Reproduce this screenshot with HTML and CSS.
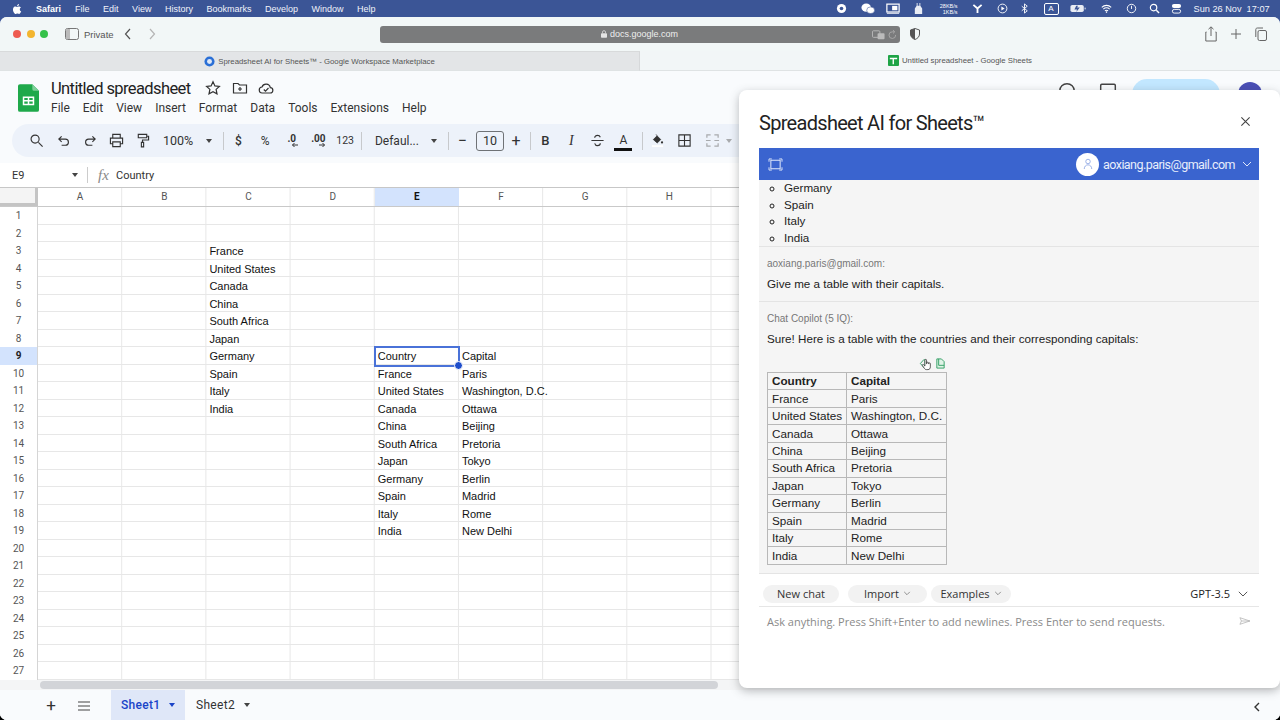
FILE: index.html
```html
<!DOCTYPE html>
<html lang="en">
<head>
<meta charset="utf-8">
<title>Untitled spreadsheet - Google Sheets</title>
<link rel="stylesheet" href="styles.css">
</head>
<body>
<header class="menubar">
  <svg class="apple" viewBox="0 0 24 24"><path fill="#fff" d="M17.6 12.8c0-2.6 2.1-3.8 2.2-3.9-1.2-1.8-3.1-2-3.7-2-1.6-.2-3.1.9-3.9.9s-2-.9-3.3-.9c-1.7 0-3.3 1-4.1 2.5-1.8 3.1-.5 7.6 1.2 10.1.9 1.2 1.9 2.6 3.2 2.5 1.3 0 1.8-.8 3.3-.8s2 .8 3.3.8c1.4 0 2.3-1.2 3.1-2.5 1-1.4 1.4-2.8 1.4-2.9-.1 0-2.7-1-2.7-3.8zM15.1 5.2c.7-.9 1.2-2 1-3.2-1 0-2.2.7-2.9 1.5-.6.7-1.2 1.9-1 3.1 1.1.1 2.2-.6 2.9-1.4z"/></svg>
  <b class="mb-app">Safari</b>
  <nav class="mb-menu"><span>File</span><span>Edit</span><span>View</span><span>History</span><span>Bookmarks</span><span>Develop</span><span>Window</span><span>Help</span></nav>
  <div class="status">
    <svg class="si" viewBox="0 0 12 12"><circle cx="6" cy="6" r="5" fill="#fff"/><circle cx="6" cy="6" r="2" fill="#3b5596"/></svg>
    <svg class="si wide" viewBox="0 0 16 12"><ellipse cx="6" cy="5" rx="5.5" ry="4.6" fill="#fff"/><ellipse cx="11" cy="8" rx="4.5" ry="3.8" fill="#fff" stroke="#3b5596" stroke-width=".6"/></svg>
    <svg class="si wide loose" viewBox="0 0 16 12"><rect x="1" y="1" width="14" height="9" fill="none" stroke="#fff" stroke-width="1.4"/><rect x="7" y="3" width="6" height="5" fill="#fff"/><path d="M1 11.5h14" stroke="#fff"/></svg>
    <svg class="si tight" viewBox="0 0 12 12"><path fill="#e8ecf4" d="M4 0h1v3h2V0h1v3l2 3v6H2V6l2-3z"/></svg>
    <div class="netspeed"><span>28KB/s</span><span>1KB/s</span></div>
    <svg class="si" viewBox="0 0 12 12"><path d="M1.5 2 6 6l4.500-4M6 6v5" fill="none" stroke="#fff" stroke-width="2"/></svg>
    <svg class="si tight" viewBox="0 0 12 12"><circle cx="6" cy="6" r="4.800" fill="none" stroke="#fff"/><path d="M4.800 3.800v4.400L8.300 6z" fill="#fff"/></svg>
    <svg class="si" viewBox="0 0 12 12"><path d="m3 3.500 6 5-3 2.500V1l3 2.500-6 5" fill="none" stroke="#fff"/></svg>
    <span class="inputbox">A</span>
    <svg class="si batt" viewBox="0 0 18 10"><rect x=".5" y="1" width="15" height="8" rx="2" fill="#e8ecf4"/><path d="M7 2 5 6h3l-1 3 4-5H8l1-2z" fill="#3b5596"/><path d="M17 4v2" stroke="#fff"/></svg>
    <svg class="si wifi" viewBox="0 0 14 12"><path d="M1 4.500a8.500 8.500 0 0 1 12 0M3 6.800a5.600 5.600 0 0 1 8 0M5 9a2.800 2.800 0 0 1 4 0" fill="none" stroke="#fff" stroke-width="1.300"/><circle cx="7" cy="10.600" r="1" fill="#fff"/></svg>
    <svg class="si mid" viewBox="0 0 12 12"><circle cx="6" cy="6" r="4.600" fill="none" stroke="#fff"/><path d="M6 3v3.500" stroke="#fff"/></svg>
    <svg class="si tight" viewBox="0 0 12 12"><circle cx="5" cy="5" r="3.500" fill="none" stroke="#fff" stroke-width="1.300"/><path d="m8 8 3 3" stroke="#fff" stroke-width="1.500"/></svg>
    <svg class="si tight" viewBox="0 0 12 12"><rect x="1" y="1" width="10" height="4.500" rx="2.200" fill="#fff"/><rect x="1.500" y="7" width="9" height="4" rx="2" fill="none" stroke="#fff"/></svg>
    <span class="clock">Sun 26 Nov&nbsp; 17:07</span>
  </div>
</header>

<div class="window">
  <div class="browserbar">
    <div class="lights"><i class="red"></i><i class="yellow"></i><i class="green"></i></div>
    <svg class="sidebar-ic" viewBox="0 0 14 12"><rect x=".5" y=".5" width="13" height="11" rx="2" fill="none" stroke="#777"/><rect x="1" y="1" width="4" height="10" fill="#bbb"/></svg>
    <span class="private">Private</span>
    <svg class="nav-ic" viewBox="0 0 8 12"><path d="M6 1 1.500 6 6 11" fill="none" stroke="#555" stroke-width="1.200"/></svg>
    <svg class="nav-ic fwd" viewBox="0 0 8 12"><path d="m2 1 4.500 5L2 11" fill="none" stroke="#b5b5b5" stroke-width="1.200"/></svg>
    <div class="urlbar">
      <span class="url"><svg class="lock" viewBox="0 0 8 10"><rect y="4" width="8" height="6" rx="1" fill="#e4e4e4"/><path d="M2 4V2.500a2 2 0 0 1 4 0V4" fill="none" stroke="#e4e4e4"/></svg>docs.google.com</span>
      <svg class="url-tr" viewBox="0 0 14 10"><rect x=".5" y=".5" width="8" height="7" rx="1" fill="none" stroke="#bbb"/><rect x="6" y="3" width="7.500" height="6.500" rx="1" fill="#bbb"/></svg>
      <svg class="url-re" viewBox="0 0 10 12"><path d="M8.500 6.500A3.700 3.700 0 1 1 5 3h2M5.500 1 7.500 3 5.500 5" fill="none" stroke="#aaa"/></svg>
    </div>
    <svg class="shield" viewBox="0 0 10 12"><path d="M5 .5 9.500 2v4c0 2.800-2 4.500-4.500 5.500C2.500 10.500.5 8.800.5 6V2z" fill="none" stroke="#555"/><path d="M5 .5V11.500C2.500 10.500.5 8.800.5 6V2z" fill="#555"/></svg>
    <div class="bb-right">
      <svg viewBox="0 0 12 16"><path d="M1.500 6H.8v9h10.400V6h-.7M6 10V1M3.500 3.200 6 .8l2.500 2.400" fill="none" stroke="#666"/></svg>
      <svg viewBox="0 0 12 16"><path d="M6 3v10M1 8h10" fill="none" stroke="#666"/></svg>
      <svg viewBox="0 0 12 16"><rect x="3" y="4.500" width="8.500" height="10" rx="1.500" fill="none" stroke="#666"/><path d="M.8 11V3.500c0-1 .7-1.500 1.500-1.500H8" fill="none" stroke="#666"/></svg>
    </div>
  </div>

  <div class="tabs">
    <div class="tab off">
      <svg class="fav" viewBox="0 0 12 12"><circle cx="6" cy="6" r="5.500" fill="#2a6fd6"/><circle cx="6" cy="6" r="2.700" fill="#dfe8f6"/></svg>
      <span>Spreadsheet AI for Sheets™ - Google Workspace Marketplace</span>
    </div>
    <div class="tab on">
      <svg class="fav" viewBox="0 0 12 12"><rect width="12" height="12" rx="1" fill="#1ea446"/><path d="M2 3h8v1.500H6.500V10H5V4.500H2z" fill="#fff"/></svg>
      <span>Untitled spreadsheet - Google Sheets</span>
    </div>
  </div>

  <main class="sheets">
    <div class="docbar">
      <svg class="logo" viewBox="0 0 22 29"><path d="M2 0h13l7 7v20a2 2 0 0 1-2 2H2a2 2 0 0 1-2-2V2a2 2 0 0 1 2-2z" fill="#1fa94b"/><path d="M15 0l7 7h-5a2 2 0 0 1-2-2z" fill="#7fd09a"/><path d="M5 13h12v9H5zm1.600 1.500v2.200h3.600v-2.200zm5.200 0v2.200h3.600v-2.200zm-5.200 3.700v2.300h3.600v-2.300zm5.200 0v2.300h3.600v-2.300z" fill="#fff" fill-rule="evenodd"/></svg>
      <div class="docmeta">
        <div class="titlerow">
          <span class="doctitle">Untitled spreadsheet</span>
          <svg class="ti" viewBox="0 0 16 16"><path d="m8 1.800 1.900 4.100 4.500.5-3.300 3 .9 4.400L8 11.600l-4 2.200.9-4.400-3.300-3 4.500-.5z" fill="none" stroke="#333" stroke-width="1.200"/></svg>
          <svg class="ti" viewBox="0 0 16 16"><path d="M1.500 3.500h4.500l1.500 1.500h7v8h-13zM8 7v4M6 9h4" fill="none" stroke="#333" stroke-width="1.200"/></svg>
          <svg class="ti" viewBox="0 0 16 16"><path d="M4.500 13a3 3 0 0 1-.5-6 4.300 4.300 0 0 1 8.300 0.600A2.700 2.700 0 0 1 12 13zM5.800 9.500l1.700 1.700L10.500 8" fill="none" stroke="#333" stroke-width="1.200"/></svg>
        </div>
        <nav class="docmenu"><span>File</span><span>Edit</span><span>View</span><span>Insert</span><span>Format</span><span>Data</span><span>Tools</span><span>Extensions</span><span>Help</span></nav>
      </div>
      <div class="share-bits">
        <svg class="hist" viewBox="0 0 16 16"><circle cx="8" cy="8" r="6.500" fill="none" stroke="#444" stroke-width="1.300"/></svg>
        <svg class="hist" viewBox="0 0 16 16"><rect x="1.500" y="2" width="13" height="11" rx="1" fill="none" stroke="#444" stroke-width="1.300"/></svg>
        <span class="sharepill"></span>
        <span class="avatar"></span>
      </div>
    </div>

    <div class="toolbar">
      <span class="tb w28"><svg viewBox="0 0 16 16"><circle cx="6.500" cy="6.500" r="4.300" class="ln"/><path d="m10 10 4.500 4.500" class="ln"/></svg></span>
      <span class="tb w27"><svg viewBox="0 0 16 16"><path d="M6 3.500 3 6.500l3 3M3 6.500h7a3 3 0 0 1 0 6.500H6" class="ln"/></svg></span>
      <span class="tb"><svg viewBox="0 0 16 16"><path d="m10 3.500 3 3-3 3M13 6.500H6a3 3 0 0 0 0 6.500h4" class="ln"/></svg></span>
      <span class="tb"><svg viewBox="0 0 16 16"><path d="M4 5V1.500h8V5M4 11.500H1.500V5.500h13v6H12M4 9.500h8v5H4z" class="ln"/></svg></span>
      <span class="tb"><svg viewBox="0 0 16 16"><path d="M3.500 1.500h9v3.500h-9zM12.500 3.500h2v4H8v2.500M6.800 10h2.400v4.800H6.800z" class="ln"/></svg></span>
      <span class="tb txt zoomv">100%</span>
      <span class="tb caret-w"><i class="caret"></i></span>
      <i class="sep"></i>
      <span class="tb txt num strong">$</span>
      <span class="tb txt num">%</span>
      <span class="tb txt num dec">.0<svg viewBox="0 0 8 6"><path d="M7 3H1.500M3.500 1 1.500 3l2 2" fill="none" stroke="#333"/></svg></span>
      <span class="tb txt num dec">.00<svg viewBox="0 0 8 6"><path d="M1 3h5.500M4.500 1l2 2-2 2" fill="none" stroke="#333"/></svg></span>
      <span class="tb txt num small">123</span>
      <i class="sep narrow"></i>
      <span class="tb txt fontname">Defaul...</span>
      <span class="tb caret-w"><i class="caret"></i></span>
      <i class="sep"></i>
      <span class="tb txt step">−</span>
      <span class="fontsize">10</span>
      <span class="tb txt step plus">+</span>
      <i class="sep narrow"></i>
      <span class="tb txt strong fmt">B</span>
      <span class="tb txt ital fmt">I</span>
      <span class="tb"><svg viewBox="0 0 16 16"><path d="M1.500 8h13" class="ln"/><path d="M11 4.500C10.500 3 9.500 2.500 8 2.500S5 3.500 5 5M5 11c.5 1.700 1.500 2.500 3 2.500s3-1 3-2.500" class="ln"/></svg></span>
      <span class="tb txt acolor">A</span>
      <i class="sep"></i>
      <span class="tb"><svg viewBox="0 0 16 16"><path d="M6.500 1.500 7.500 3l4 4-3.800 3.600L3.500 7l4-4" fill="#333" stroke="#333" stroke-width=".8"/><circle cx="12.800" cy="10" r="1.200" fill="#333"/><rect x="2" y="13" width="12" height="2" fill="#fff"/></svg></span>
      <span class="tb w28"><svg viewBox="0 0 16 16"><path d="M2 2h12v12H2zM8 2v12M2 8h12" class="ln"/></svg></span>
      <span class="tb w28"><svg viewBox="0 0 16 16"><path d="M2 5V2h4M10 2h4v3M2 11v3h4M10 14h4v-3M1 8h5M15 8h-5" fill="none" stroke="#a8aaad" stroke-width="1.300"/></svg></span>
      <span class="tb caret-w pull"><i class="caret dim"></i></span>
    </div>

    <div class="formulabar">
      <span class="namebox">E9</span><i class="caret"></i><i class="fsep"></i>
      <span class="fx">fx</span><span class="fval">Country</span>
    </div>

    <div class="grid">
      <div class="row head"><span class="rh corner"></span><span>A</span><span>B</span><span>C</span><span>D</span><span class="cur">E</span><span>F</span><span>G</span><span>H</span></div>
      <div class="row"><span class="rh">1</span></div>
      <div class="row"><span class="rh">2</span></div>
      <div class="row"><span class="rh">3</span><span class="c">France</span></div>
      <div class="row"><span class="rh">4</span><span class="c">United States</span></div>
      <div class="row"><span class="rh">5</span><span class="c">Canada</span></div>
      <div class="row"><span class="rh">6</span><span class="c">China</span></div>
      <div class="row"><span class="rh">7</span><span class="c">South Africa</span></div>
      <div class="row"><span class="rh">8</span><span class="c">Japan</span></div>
      <div class="row"><span class="rh cur">9</span><span class="c">Germany</span><span class="e selected">Country</span><span class="f">Capital</span></div>
      <div class="row"><span class="rh">10</span><span class="c">Spain</span><span class="e">France</span><span class="f">Paris</span></div>
      <div class="row"><span class="rh">11</span><span class="c">Italy</span><span class="e">United States</span><span class="f">Washington, D.C.</span></div>
      <div class="row"><span class="rh">12</span><span class="c">India</span><span class="e">Canada</span><span class="f">Ottawa</span></div>
      <div class="row"><span class="rh">13</span><span class="e">China</span><span class="f">Beijing</span></div>
      <div class="row"><span class="rh">14</span><span class="e">South Africa</span><span class="f">Pretoria</span></div>
      <div class="row"><span class="rh">15</span><span class="e">Japan</span><span class="f">Tokyo</span></div>
      <div class="row"><span class="rh">16</span><span class="e">Germany</span><span class="f">Berlin</span></div>
      <div class="row"><span class="rh">17</span><span class="e">Spain</span><span class="f">Madrid</span></div>
      <div class="row"><span class="rh">18</span><span class="e">Italy</span><span class="f">Rome</span></div>
      <div class="row"><span class="rh">19</span><span class="e">India</span><span class="f">New Delhi</span></div>
      <div class="row"><span class="rh">20</span></div>
      <div class="row"><span class="rh">21</span></div>
      <div class="row"><span class="rh">22</span></div>
      <div class="row"><span class="rh">23</span></div>
      <div class="row"><span class="rh">24</span></div>
      <div class="row"><span class="rh">25</span></div>
      <div class="row"><span class="rh">26</span></div>
      <div class="row"><span class="rh">27</span></div>
      <div class="scrollrow"><span class="thumb"></span></div>
    </div>

    <footer class="sheetbar">
      <span class="sb-ic plus-ic">+</span>
      <svg class="sb-menu" viewBox="0 0 12 10"><path d="M0 1h12M0 5h12M0 9h12" stroke="#444" stroke-width="1.200"/></svg>
      <span class="sheettab active">Sheet1<i class="caret blue"></i></span>
      <span class="sheettab second">Sheet2<i class="caret"></i></span>
      <svg class="collapse" viewBox="0 0 8 12"><path d="M6 2 2 6l4 4" fill="none" stroke="#333" stroke-width="1.400"/></svg>
    </footer>

    <aside class="dialog">
      <div class="dlg-head">
        <h1>Spreadsheet AI for Sheets™</h1>
        <svg class="close" viewBox="0 0 12 12"><path d="m1.500 1.500 9 9M10.500 1.500l-9 9" stroke="#444" stroke-width="1.200"/></svg>
      </div>
      <div class="bluebar">
        <svg class="expand" viewBox="0 0 16 14"><path d="M3 2.500h10v9H3z" fill="none" stroke="#dfe7fa" stroke-width="1.100"/><path d="M1 1h3M1 1v3M15 1h-3M15 1v3M1 13h3M1 13v-3M15 13h-3M15 13v-3" stroke="#dfe7fa"/></svg>
        <span class="userbadge"><svg viewBox="0 0 12 14"><circle cx="6" cy="4" r="2.700" fill="none" stroke="#8aa4e2"/><path d="M1.500 13c0-3 2-5 4.500-5s4.500 2 4.500 5" fill="none" stroke="#8aa4e2"/></svg></span>
        <span class="useremail">aoxiang.paris@gmail.com</span>
        <svg class="chev" viewBox="0 0 10 6"><path d="m1 1 4 4 4-4" fill="none" stroke="#dfe7fa"/></svg>
      </div>
      <div class="chat">
        <ul class="list"><li>Germany</li><li>Spain</li><li>Italy</li><li>India</li></ul>
        <section class="msg user">
          <div class="who">aoxiang.paris@gmail.com:</div>
          <p>Give me a table with their capitals.</p>
        </section>
        <section class="msg bot">
          <div class="who">Chat Copilot (5 IQ):</div>
          <p>Sure! Here is a table with the countries and their corresponding capitals:</p>
          <div class="tbl-actions">
            <svg viewBox="0 0 12 12"><path d="M5.500 1.500 1.500 6l4 4.500 1-1V2.500z" fill="none" stroke="#2f9e63"/></svg>
            <svg viewBox="0 0 12 12"><path d="M2 1h5l3 3v7H2z" fill="#dff3e6" stroke="#2f9e63"/><path d="M4 1v7h6" fill="none" stroke="#2f9e63"/></svg>
            <svg class="hand" viewBox="0 0 14 16"><path d="M5 7V2.500a1 1 0 0 1 2 0V7h.5V6a1 1 0 0 1 2 0v1h.4a1 1 0 0 1 2 0v4c0 2-1 3.500-3 3.500H7c-1.500 0-2.200-.8-3-2L1.800 9.300c-.6-1 .8-1.800 1.500-1L5 10z" fill="#fff" stroke="#222" stroke-width=".9"/></svg>
          </div>
          <table class="result">
            <tr><th>Country</th><th>Capital</th></tr>
            <tr><td>France</td><td>Paris</td></tr>
            <tr><td>United States</td><td>Washington, D.C.</td></tr>
            <tr><td>Canada</td><td>Ottawa</td></tr>
            <tr><td>China</td><td>Beijing</td></tr>
            <tr><td>South Africa</td><td>Pretoria</td></tr>
            <tr><td>Japan</td><td>Tokyo</td></tr>
            <tr><td>Germany</td><td>Berlin</td></tr>
            <tr><td>Spain</td><td>Madrid</td></tr>
            <tr><td>Italy</td><td>Rome</td></tr>
            <tr><td>India</td><td>New Delhi</td></tr>
          </table>
        </section>
      </div>
      <div class="actions">
        <span class="pill newchat">New chat</span>
        <span class="pill import">Import<svg viewBox="0 0 10 6"><path d="m1.500 1 3.500 3.500L8.500 1" fill="none" stroke="#777"/></svg></span>
        <span class="pill examples">Examples<svg viewBox="0 0 10 6"><path d="m1.500 1 3.500 3.500L8.500 1" fill="none" stroke="#777"/></svg></span>
        <span class="model">GPT-3.5<svg viewBox="0 0 10 6"><path d="m.8.800 4.200 4.200L9.200.800" fill="none" stroke="#555"/></svg></span>
      </div>
      <div class="inputrow">
        <span class="placeholder">Ask anything. Press Shift+Enter to add newlines. Press Enter to send requests.</span>
        <svg class="send" viewBox="0 0 13 9"><path d="M.8.800 12 4.500.8 8.200 2.500 4.500zM2.500 4.500H12" fill="none" stroke="#b5b5b5" stroke-width=".9"/></svg>
      </div>
    </aside>
  </main>
</div>
</body>
</html>
```
FILE: styles.css
```css
* { box-sizing: border-box; }
html, body { margin: 0; height: 720px; overflow: hidden; }
body {
  background: linear-gradient(#3b5596 50%, #000 50%);
  font-family: "Liberation Sans", Arial, sans-serif;
  color: #222;
  position: relative;
}
svg { display: block; flex: none; }

/* macOS menu bar */
.menubar {
  height: 17px;
  display: flex;
  align-items: center;
  padding-left: 11px;
  background: #3b5596;
  color: #fff;
  font-size: 9px;
}
.apple { width: 12px; height: 12px; }
.mb-app { margin-left: 13px; }
.mb-menu { display: flex; gap: 13.500px; margin-left: 14px; color: #f0f3fa; }
.status { margin-left: auto; display: flex; align-items: center; width: 444px; }
.si { width: 11px; height: 11px; margin-right: 13.500px; }
.si.wide { width: 14px; margin-right: 11px; }
.si.wide.loose { margin-right: 13.500px; }
.si.tight { margin-right: 11.500px; }
.si.mid { margin-right: 12px; }
.si.batt { width: 16px; margin-right: 14.500px; }
.si.wifi { margin-right: 14px; }
.netspeed { display: flex; flex-direction: column; align-items: flex-end; font-size: 5.500px; line-height: 6px; width: 22px; margin-right: 14.500px; }
.inputbox { width: 15px; height: 12px; border: 1px solid #fff; border-radius: 2px; font-size: 8px; text-align: center; line-height: 10px; margin-right: 11.500px; }
.clock { font-size: 9.200px; color: #f0f3fa; white-space: nowrap; }

/* window */
.window {
  height: 703px;
  display: flex;
  flex-direction: column;
  border-radius: 7px;
  overflow: hidden;
  background: #f9fbfd;
}
.browserbar {
  height: 34px;
  flex: none;
  display: flex;
  align-items: center;
  padding-left: 13px;
  background: #f2f7f7;
  font-size: 9.500px;
  color: #555;
}
.lights { display: flex; gap: 5.500px; }
.lights i { width: 8px; height: 8px; border-radius: 50%; }
.red { background: #ee5b50; }
.yellow { background: #f3b52f; }
.green { background: #35c14a; }
.sidebar-ic { width: 14px; height: 12px; margin-left: 17px; }
.private { margin-left: 5px; width: 35px; }
.nav-ic { width: 8px; height: 12px; margin-left: 5px; }
.nav-ic.fwd { margin-left: 16px; }
.urlbar {
  margin-left: 224px;
  width: 520px;
  height: 17px;
  flex: none;
  border-radius: 3px;
  background: #7a7b7c;
  display: flex;
  align-items: center;
  position: relative;
  color: #eee;
  font-size: 9px;
}
.url { margin-left: 221px; display: flex; align-items: center; gap: 3px; white-space: nowrap; }
.lock { width: 6px; height: 8px; }
.url-tr { position: absolute; right: 15px; top: 4px; width: 13px; height: 10px; }
.url-re { position: absolute; right: 3px; top: 3px; width: 9px; height: 11px; }
.shield { width: 10px; height: 12px; margin-left: 10px; }
.bb-right { margin-left: auto; display: flex; gap: 13px; padding-right: 13px; }
.bb-right svg { width: 12px; height: 16px; }

.tabs { height: 20px; flex: none; display: flex; font-size: 7.800px; color: #555; }
.tab { width: 50%; display: flex; align-items: center; justify-content: center; gap: 3px; border-bottom: 1px solid #dfe3e4; }
.tab.off { background: #e3e5e7; border-right: 1px solid #d6d8da; border-top: 1px solid #d8dadb; }
.tab.on { background: #f2f6f7; }
.fav { width: 11px; height: 11px; }

/* sheets */
.sheets { flex: 1; position: relative; display: flex; flex-direction: column; background: #f9fbfd; min-height: 0; }
.docbar { height: 53px; flex: none; display: flex; padding: 13px 0 0 18px; position: relative; }
.logo { width: 21px; height: 28px; }
.docmeta { margin-left: 12px; margin-top: -6px; font-family: Roboto, sans-serif; }
.titlerow { display: flex; align-items: center; height: 20px; }
.doctitle { font-size: 16.500px; letter-spacing: -.6px; color: #222; width: 154px; white-space: nowrap; }
.ti { width: 16px; height: 16px; margin-right: 10.500px; }
.docmenu { display: flex; gap: 13px; font-size: 12px; margin-top: 3px; color: #333; }
.share-bits { position: absolute; left: 1058px; top: 7px; display: flex; align-items: flex-start; }
.hist { width: 18px; height: 18px; margin-top: 4px; margin-right: 23px; }
.hist + .hist { margin-right: 15px; }
.sharepill { width: 88px; height: 30px; border-radius: 15px; background: #c2e7ff; margin-top: 1px; }
.avatar { width: 24px; height: 24px; border-radius: 50%; background: #4a4fb5; margin: 4px 0 0 18px; }

.toolbar {
  height: 33px;
  flex: none;
  margin: 0 0 0 12px;
  padding-left: 10px;
  display: flex;
  align-items: center;
  background: #edf2fa;
  border-radius: 17px 0 0 17px;
  font-family: Roboto, sans-serif;
  font-size: 12px;
  color: #333;
}
.tb { width: 26px; flex: none; display: flex; justify-content: center; align-items: center; }
.tb svg { width: 15px; height: 15px; }
.tb.w28 { width: 28px; }
.tb.w27 { width: 27px; }
.tb.num { width: 26.700px; }
.ln { fill: none; stroke: #333; stroke-width: 1.200; }
.txt { height: 18px; }
.zoomv { width: 46px; font-size: 12.500px; }
.caret-w { width: 16px; }
.caret-w.pull { margin-left: -5px; }
.caret { display: inline-block; width: 0; height: 0; border: 3.500px solid transparent; border-top: 4px solid #444; border-bottom: 0; }
.caret.dim { border-top-color: #a8aaad; }
.sep { width: 1px; height: 18px; background: #c7c9cc; margin: 0 1px 0 6px; flex: none; }
.sep.narrow { margin-left: 2.500px; }
.strong { font-weight: 500; }
.small { font-size: 10.500px; }
.dec { font-size: 10px; font-weight: 700; position: relative; top: -2px; }
.dec svg { position: absolute; width: 8px; height: 6px; left: 13px; top: 12px; }
.fontname { width: 63px; font-size: 12px; justify-content: flex-start; padding-left: 12px; white-space: nowrap; }
.step { width: 25px; font-size: 16px; }
.fontsize { width: 28px; height: 20px; margin-left: 1px; border: 1px solid #6f7276; border-radius: 3px; text-align: center; font-size: 12.500px; line-height: 18px; flex: none; }
.step.plus { width: 24px; }
.fmt { font-size: 13px; }
.ital { font-style: italic; font-family: "Liberation Serif", serif; font-size: 14px; }
.acolor { position: relative; font-size: 12px; top: -1px; }
.acolor::after { content: ""; position: absolute; left: 4px; right: 4px; bottom: -2px; height: 2.500px; background: #111; }

.formulabar {
  height: 24px;
  margin-top: 6px;
  flex: none;
  display: flex;
  align-items: center;
  background: #fff;
  padding-left: 12px;
  font-size: 11px;
  font-family: Roboto, sans-serif;
  color: #333;
}
.namebox { width: 60px; }
.fsep { width: 1px; height: 16px; background: #ccc; margin-left: 9px; }
.fx { font-family: "Liberation Serif", serif; font-style: italic; font-size: 15px; color: #888; margin-left: 10px; width: 18px; }

.grid { flex: 1; background: #fff; display: flex; flex-direction: column; min-height: 0; border-top: 1px solid #c7c7c7; }
.row {
  height: 17.500px;
  flex: none;
  display: grid;
  grid-template-columns: 38px repeat(9, 84.200px);
  border-bottom: 1px solid #e7e7e7;
  background: linear-gradient(to left, #e7e7e7 1px, transparent 1px) 38px 0 / 84.200px 100% repeat-x;
  font-size: 11px;
  line-height: 18.500px;
  color: #111;
}
.rh { background: #fff; grid-column: 1; border-right: 1px solid #d5d5d5; color: #555; font-size: 10px; line-height: 18px; text-align: center; font-family: Roboto, sans-serif; }
.rh.cur { background: #d3e3fd; font-weight: 700; color: #222; }
.c, .e, .f { padding-left: 3px; white-space: nowrap; position: relative; }
.c { grid-column: 4; }
.e { grid-column: 6; }
.f { grid-column: 7; }
.row.head { height: 19px; color: #555; font-size: 10px; line-height: 18px; text-align: center; font-family: Roboto, sans-serif; border-bottom-color: #c9c9c9; }
.row.head .corner { background: #f4f4f4; border-right: 3px solid #c4c4c4; border-bottom: 3px solid #c4c4c4; }
.row.head .cur { background: #d3e3fd; font-weight: 700; color: #111; }
.selected { outline: 2px solid #4a72d8; outline-offset: -1.500px; z-index: 1; }
.selected::after { content: ""; position: absolute; right: -4px; bottom: -4px; width: 7px; height: 7px; border-radius: 50%; background: #1f4ecb; border: 1px solid #fff; }
.scrollrow { height: 10px; flex: none; padding: 1px 0 0 40px; background: #f4f5f6; }
.thumb { display: block; width: 678px; height: 8px; border-radius: 4px; background: #d2d4d8; }

.sheetbar { height: 30px; flex: none; display: flex; align-items: stretch; padding-left: 45px; background: #f9fbfd; font-family: Roboto, sans-serif; font-size: 12px; position: relative; }
.sb-ic { width: 12px; font-size: 17px; text-align: center; line-height: 30px; color: #333; }
.sb-menu { width: 12px; height: 10px; margin: 11px 0 0 21px; }
.sheettab { display: flex; align-items: center; gap: 9px; padding: 0 10px; color: #333; letter-spacing: .3px; }
.sheettab.second { margin-left: 1px; }
.sheettab.active { margin-left: 21px; width: 74px; background: #dfe7f8; color: #1a44c8; font-weight: 500; }
.caret.blue { border-top-color: #1a44c8; }
.collapse { position: absolute; right: 19px; top: 11px; width: 8px; height: 12px; }

/* dialog */
.dialog {
  position: absolute;
  left: 739px;
  top: 19px;
  width: 541px;
  height: 598px;
  background: #fff;
  border-radius: 8px;
  box-shadow: 0 3px 10px rgba(60,64,67,.35);
  padding: 0 21px 0 20px;
  display: flex;
  flex-direction: column;
  z-index: 5;
}
.dlg-head { height: 58px; flex: none; display: flex; align-items: center; justify-content: space-between; padding: 8px 8px 0 0; }
.dlg-head h1 { margin: 0; font-family: Roboto, sans-serif; font-weight: 400; font-size: 20px; letter-spacing: -.7px; color: #222; }
.close { width: 11px; height: 11px; margin-top: -4px; }
.bluebar { height: 32px; flex: none; display: flex; align-items: center; background: #3a64cf; padding: 0 7px 0 9px; color: #fff; font-family: Roboto, sans-serif; }
.expand { width: 15px; height: 13px; }
.userbadge { margin-left: auto; width: 23px; height: 23px; border-radius: 50%; background: #fff; display: flex; align-items: center; justify-content: center; }
.userbadge svg { width: 10px; height: 12px; }
.useremail { margin-left: 4px; color: #e8eefb; font-size: 12.500px; letter-spacing: -.55px; }
.chev { width: 10px; height: 6px; margin-left: 7px; }

.chat { height: 394px; flex: none; background: #f5f5f5; border-bottom: 1px solid #e4e4e4; font-size: 11.650px; overflow: hidden; color: #222; }
.list { margin: 0; padding: 0 0 0 25px; list-style: circle; height: 67px; border-bottom: 1px solid #e4e4e4; line-height: 16.700px; }
.msg { padding: 0 8px; }
.who { font-size: 10px; color: #777; }
.msg p { margin: 8px 0 0; }
.msg.user { height: 55px; border-bottom: 1px solid #e4e4e4; padding-top: 11px; }
.msg.bot { padding-top: 11px; }
.tbl-actions { height: 17px; margin-top: 10px; display: flex; width: 179px; justify-content: flex-end; gap: 5px; position: relative; align-items: center; }
.tbl-actions svg { width: 11px; height: 11px; }
.tbl-actions .hand { position: absolute; right: 14px; top: 3px; width: 11px; height: 13px; }
.result { border-collapse: collapse; width: 180px; table-layout: fixed; font-size: 11.700px; }
.result th, .result td { border: 1px solid #b8b8b8; height: 17.450px; padding: 0 0 0 4px; text-align: left; white-space: nowrap; line-height: 16px; }
.result th:first-child, .result td:first-child { width: 79px; }

.actions { height: 33px; flex: none; display: flex; align-items: center; border-bottom: 1px solid #e6e6e6; padding: 7px 0 0 4px; font-family: "Open Sans", sans-serif; font-size: 11px; color: #333; }
.pill { height: 18px; border-radius: 9px; background: #f2f2f2; display: flex; align-items: center; justify-content: center; gap: 4px; }
.pill svg { width: 8px; height: 5px; }
.newchat { width: 76px; }
.import { width: 79px; margin-left: 9px; }
.examples { width: 80px; margin-left: 4px; }
.model { margin-left: auto; display: flex; align-items: center; gap: 8px; padding-right: 11px; color: #222; }
.model svg { width: 10px; height: 6px; }
.inputrow { height: 28px; flex: none; display: flex; align-items: center; justify-content: space-between; padding: 0 8px; font-family: "Open Sans", sans-serif; font-size: 11px; color: #8a8a8a; }
.send { width: 12px; height: 8px; }
```
